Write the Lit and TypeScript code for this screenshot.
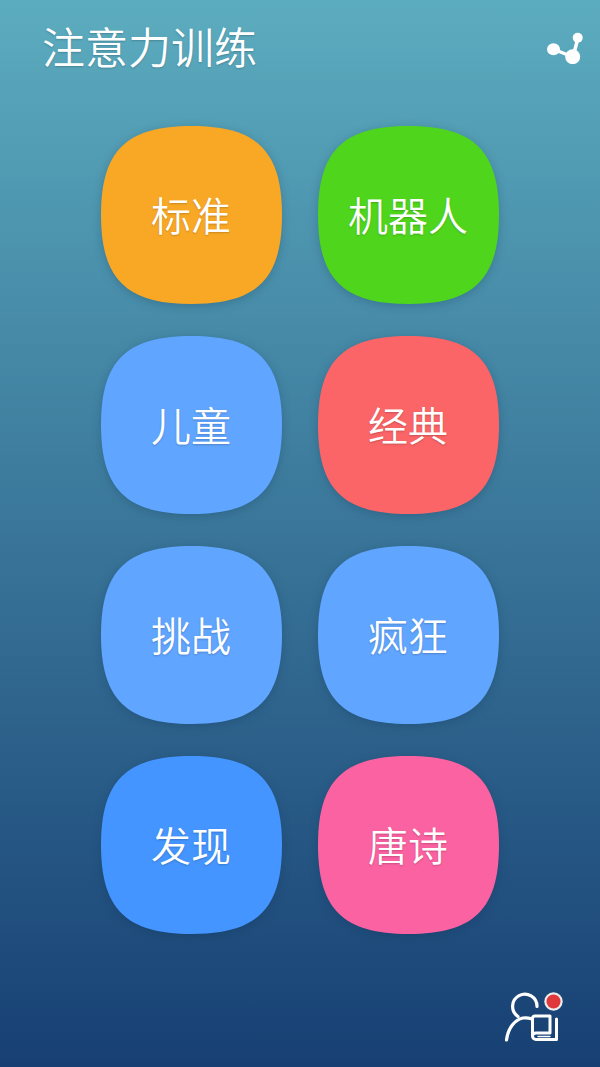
import { LitElement, html, css, svg } from 'lit';
import { customElement, property } from 'lit/decorators.js';

const SQUIRCLE =
  'M90.5 0C156 0 181 25 181 89C181 153 156 178 90.5 178C25 178 0 153 0 89C0 25 25 0 90.5 0Z';

@customElement('mode-tile')
export class ModeTile extends LitElement {
  @property({ type: String }) label = '';

  @property({ type: String }) color = '#60a5ff';

  render() {
    return html`
      <svg class="shape" viewBox="0 0 181 178" width="181" height="178">
        ${svg`<path d=${SQUIRCLE} fill=${this.color}></path>`}
      </svg>
      <span class="label">${this.label}</span>
    `;
  }

  static styles = css`
    :host {
      display: flex;
      width: 181px;
      height: 178px;
      position: relative;
      align-items: center;
      justify-content: center;
    }
    .shape {
      position: absolute;
      left: 0;
      top: 0;
      overflow: visible;
      filter: drop-shadow(0 2px 5px rgba(10, 40, 70, 0.24));
    }
    .label {
      position: relative;
      top: -1px;
      color: #fff;
      font-size: 40px;
      line-height: 1;
      font-weight: 350;
      text-shadow: 0 1px 2px rgba(0, 0, 0, 0.2);
    }
  `;
}

const TILES = [
  { label: '标准', color: '#f9a825' },
  { label: '机器人', color: '#4fd61c' },
  { label: '儿童', color: '#60a5ff' },
  { label: '经典', color: '#fb6567' },
  { label: '挑战', color: '#60a5ff' },
  { label: '疯狂', color: '#60a5ff' },
  { label: '发现', color: '#4495ff' },
  { label: '唐诗', color: '#fb62a1' },
];

@customElement('app-root')
export class AppRoot extends LitElement {
  render() {
    return html`
      <header>
        <h1>注意力训练</h1>
        <svg class="share" viewBox="0 0 42 34" width="42" height="34">
          <path d="M8 19L28 27L33 8" fill="none" stroke="#fff" stroke-width="3.5"></path>
          <ellipse cx="8.5" cy="19.3" rx="6.5" ry="6" fill="#fff"></ellipse>
          <circle cx="27.7" cy="26.7" r="7.5" fill="#fff"></circle>
          <circle cx="32.7" cy="7.7" r="5" fill="#fff"></circle>
        </svg>
      </header>
      <main>
        ${TILES.map(
          t => html`<mode-tile .label=${t.label} .color=${t.color}></mode-tile>`
        )}
      </main>
      <footer>
        <svg class="profile" viewBox="0 0 65 56" width="65" height="56">
          <g fill="none" stroke="#fff" stroke-linecap="round" stroke-linejoin="round">
            <path stroke-width="3.2" d="M37 18.5A12.2 12.2 0 1 0 18 28.5"></path>
            <path stroke-width="3.2" d="M6.5 52C8 40 15 31.5 23 30C26 29.5 29 30 32 31"></path>
            <path stroke-width="3" d="M32.5 48V30.5C32.5 29 33.5 28 35 28H50V45H36C34 45 32.5 46 32.5 48C32.5 50 34 51.5 36 51.5H56.5V31"></path>
            <path stroke-width="1.5" d="M38 48.5H50"></path>
          </g>
          <circle cx="53.5" cy="13.5" r="9.2" fill="#ececec"></circle>
          <circle cx="53.5" cy="13.5" r="7" fill="#e0393b"></circle>
        </svg>
      </footer>
    `;
  }

  static styles = css`
    :host {
      display: flex;
      flex-direction: column;
      width: 600px;
      height: 1067px;
      overflow: hidden;
      background: linear-gradient(180deg, #5cacbf 0%, #173f73 100%);
      font-family: 'Noto Sans CJK SC', 'Noto Sans', sans-serif;
    }
    header {
      display: flex;
      justify-content: space-between;
      align-items: center;
      height: 94px;
      padding: 0 13px 0 42px;
    }
    h1 {
      margin: 0;
      position: relative;
      top: -2px;
      color: #fff;
      font-size: 43px;
      line-height: 1;
      font-weight: 350;
      text-shadow: 0 1px 2px rgba(0, 0, 0, 0.2);
    }
    main {
      display: grid;
      grid-template-columns: 181px 181px;
      grid-auto-rows: 178px;
      column-gap: 36px;
      row-gap: 32px;
      justify-content: center;
      margin-top: 32px;
      padding-right: 1px;
    }
    footer {
      display: flex;
      justify-content: flex-end;
      margin-top: auto;
      padding: 0 35px 23px 0;
    }
  `;
}
